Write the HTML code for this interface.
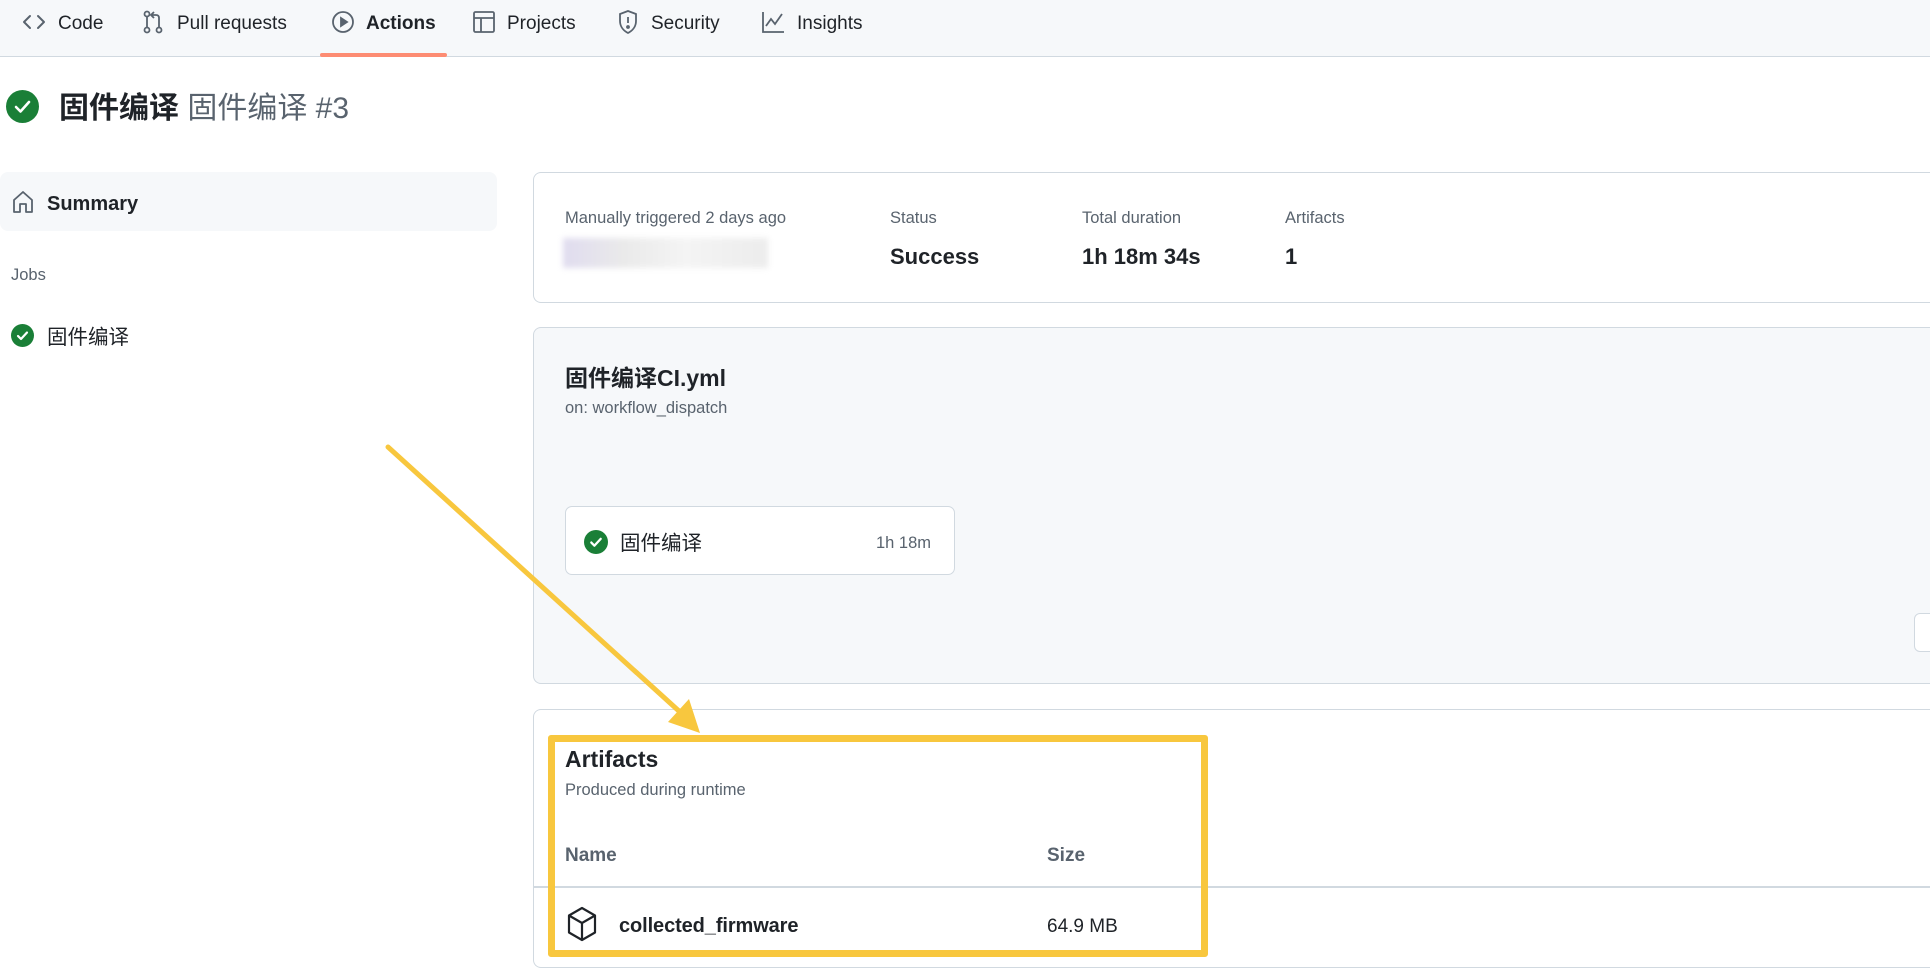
<!DOCTYPE html>
<html><head><meta charset="utf-8">
<style>
*{margin:0;padding:0;box-sizing:border-box}
body{width:1930px;height:975px;overflow:hidden;background:#fff;font-family:"Liberation Sans","Noto Sans CJK SC",sans-serif;color:#1f2328;position:relative}
.a{position:absolute;white-space:nowrap}
.nav{position:absolute;left:0;top:0;width:1930px;height:57px;background:#f6f8fa;border-bottom:1px solid #d1d9e0}
.nt{font-size:19px;top:13px;color:#1f2328}
.ic{position:absolute}
.card{position:absolute;border:1px solid #d1d9e0;border-radius:8px;border-right:none;border-top-right-radius:0;border-bottom-right-radius:0}
.g{color:#59636e}
.lbl{font-size:16.5px;color:#59636e}
.big{font-size:22px;font-weight:bold}
</style></head><body>
<div class="nav"></div>
<svg class="ic" style="left:22px;top:12px" width="24" height="20" viewBox="0 0 24 20" fill="none" stroke="#59636e" stroke-width="2" stroke-linecap="round" stroke-linejoin="round"><path d="M8 4L2 10l6 6M16 4l6 6-6 6"/></svg>
<div class="a nt" style="left:58px">Code</div>
<svg class="ic" style="left:142px;top:10px" width="22" height="24" viewBox="0 0 22 24" fill="none" stroke="#59636e" stroke-width="1.8"><circle cx="5" cy="4" r="2.5"/><circle cx="5" cy="20" r="2.5"/><circle cx="17" cy="20" r="2.5"/><path d="M5 7v10M17 17V8c0-2-1-3-3-3h-4M12 2l-3 3 3 3"/></svg>
<div class="a nt" style="left:177px">Pull requests</div>
<svg class="ic" style="left:331px;top:10px" width="24" height="24" viewBox="0 0 24 24" fill="none" stroke="#59636e" stroke-width="1.8"><circle cx="12" cy="12" r="10"/><path d="M10 8v8l6-4z" fill="#59636e"/></svg>
<div class="a nt" style="left:366px;font-weight:bold">Actions</div>
<div class="a" style="left:320px;top:53px;width:127px;height:4px;background:#fd8c73;border-radius:2px"></div>
<svg class="ic" style="left:472px;top:10px" width="24" height="24" viewBox="0 0 24 24" fill="none" stroke="#59636e" stroke-width="1.8"><rect x="2" y="2" width="20" height="20" rx="1.5"/><path d="M2 8h20M9 8v14"/></svg>
<div class="a nt" style="left:507px">Projects</div>
<svg class="ic" style="left:617px;top:9px" width="22" height="26" viewBox="0 0 22 26" fill="none" stroke="#59636e" stroke-width="1.8"><path d="M11 2l8 3v7c0 6-4 10-8 12-4-2-8-6-8-12V5z"/><path d="M11 8v6"/><circle cx="11" cy="18" r="1" fill="#59636e"/></svg>
<div class="a nt" style="left:651px">Security</div>
<svg class="ic" style="left:761px;top:11px" width="24" height="22" viewBox="0 0 24 22" fill="none" stroke="#59636e" stroke-width="1.8"><path d="M2 1v20h21M5 15l5-7 4 5 7-10"/></svg>
<div class="a nt" style="left:797px">Insights</div>

<svg class="ic" style="left:6px;top:90px" width="33" height="33" viewBox="0 0 33 33"><circle cx="16.5" cy="16.5" r="16.5" fill="#1a7f37"/><path d="M10 17l4.5 4.5L23 12" stroke="#fff" stroke-width="2.6" fill="none" stroke-linecap="round" stroke-linejoin="round"/></svg>
<div class="a" style="left:59px;top:83px;font-size:30px"><b>固件编译</b> <span class="g">固件编译 #3</span></div>

<div class="a" style="left:0;top:172px;width:497px;height:59px;background:#f6f8fa;border-radius:8px"></div>
<svg class="ic" style="left:12px;top:190px" width="22" height="24" viewBox="0 0 22 24" fill="none" stroke="#59636e" stroke-width="1.8" stroke-linejoin="round"><path d="M2 10L11 2l9 8v12h-6v-8H8v8H2z"/></svg>
<div class="a" style="left:47px;top:193px;font-size:20px;font-weight:bold">Summary</div>
<div class="a g" style="left:11px;top:266px;font-size:16.5px">Jobs</div>
<svg class="ic" style="left:11px;top:324px" width="23" height="23" viewBox="0 0 23 23"><circle cx="11.5" cy="11.5" r="11.5" fill="#1a7f37"/><path d="M7 12l3 3 6-6.5" stroke="#fff" stroke-width="2.2" fill="none" stroke-linecap="round" stroke-linejoin="round"/></svg>
<div class="a" style="left:47px;top:320px;font-size:20.5px">固件编译</div>

<div class="card" style="left:533px;top:172px;width:1400px;height:131px;background:#fff"></div>
<div class="a lbl" style="left:565px;top:209px">Manually triggered 2 days ago</div>
<div class="a" style="left:563px;top:238px;width:205px;height:30px;background:linear-gradient(90deg,#e0dcef,#eaeaea 30%,#f4f4f4 60%,#ececec);filter:blur(3px)"></div>
<div class="a lbl" style="left:890px;top:209px">Status</div>
<div class="a big" style="left:890px;top:244px">Success</div>
<div class="a lbl" style="left:1082px;top:209px">Total duration</div>
<div class="a big" style="left:1082px;top:244px">1h 18m 34s</div>
<div class="a lbl" style="left:1285px;top:209px">Artifacts</div>
<div class="a big" style="left:1285px;top:244px">1</div>

<div class="card" style="left:533px;top:327px;width:1400px;height:357px;background:#f6f8fa"></div>
<div class="a" style="left:565px;top:359px;font-size:23px;font-weight:bold">固件编译CI.yml</div>
<div class="a lbl" style="left:565px;top:399px">on: workflow_dispatch</div>
<div class="a" style="left:565px;top:506px;width:390px;height:69px;background:#fff;border:1px solid #d1d9e0;border-radius:7px"></div>
<svg class="ic" style="left:584px;top:530px" width="24" height="24" viewBox="0 0 23 23"><circle cx="11.5" cy="11.5" r="11.5" fill="#1a7f37"/><path d="M7 12l3 3 6-6.5" stroke="#fff" stroke-width="2.2" fill="none" stroke-linecap="round" stroke-linejoin="round"/></svg>
<div class="a" style="left:620px;top:526px;font-size:20.5px">固件编译</div>
<div class="a g" style="left:876px;top:534px;font-size:16.5px">1h 18m</div>
<div class="a" style="left:1914px;top:613px;width:30px;height:39px;background:#fff;border:1px solid #d1d9e0;border-radius:6px"></div>

<div class="card" style="left:533px;top:709px;width:1400px;height:259px;background:#fff"></div>
<div class="a" style="left:565px;top:746px;font-size:23px;font-weight:bold">Artifacts</div>
<div class="a lbl" style="left:565px;top:781px">Produced during runtime</div>
<div class="a g" style="left:565px;top:845px;font-size:19px;font-weight:bold">Name</div>
<div class="a g" style="left:1047px;top:845px;font-size:19px;font-weight:bold">Size</div>
<div class="a" style="left:534px;top:886px;width:1400px;height:2px;background:#d1d9e0"></div>
<svg class="ic" style="left:566px;top:906px" width="32" height="36" viewBox="0 0 32 36" fill="none" stroke="#1f2328" stroke-width="2.2" stroke-linejoin="round"><path d="M16 2l13 7.5v17L16 34 3 26.5v-17z"/><path d="M3 9.5L16 17l13-7.5M16 17v17"/></svg>
<div class="a" style="left:619px;top:915px;font-size:20px;font-weight:bold;letter-spacing:-0.1px">collected_firmware</div>
<div class="a" style="left:1047px;top:916px;font-size:19px">64.9 MB</div>

<div class="a" style="left:548px;top:735px;width:660px;height:222px;border:7px solid #f8c73e;border-radius:3px"></div>
<svg class="ic" style="left:0;top:0" width="1930" height="975"><line x1="388" y1="447" x2="680" y2="712" stroke="#f8c73e" stroke-width="5" stroke-linecap="round"/><path d="M700 733L668 722 689 699z" fill="#f8c73e"/></svg>
</body></html>
